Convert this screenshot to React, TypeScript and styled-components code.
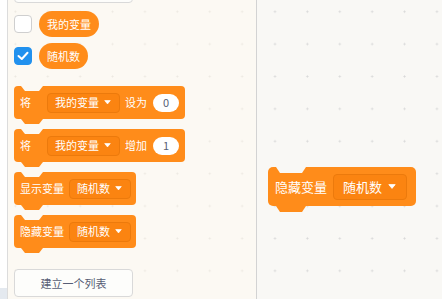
import styled, { createGlobalStyle } from 'styled-components';

const ORANGE = '#ff8c1a';
const PALETTE_BG = '#fcf9f3';
const WORKSPACE_BG = '#f9f8f5';

const GlobalStyle = createGlobalStyle`
  html, body {
    margin: 0;
    padding: 0;
    overflow: hidden;
  }
  body {
    font-family: 'Noto Sans CJK SC', 'Noto Sans', sans-serif;
  }
`;

function CheckIcon() {
  return (
    <svg width='12' height='10' viewBox='0 0 12 10'>
      <polyline points='1.5,5 4.8,8 10.5,1.8' fill='none' stroke='#fff' strokeWidth='2' strokeLinecap='round' strokeLinejoin='round' />
    </svg>
  );
}

function Caret({ lg }: { lg?: boolean }) {
  const w = lg ? 8 : 7;
  return (
    <svg width={w} height={lg ? 5 : 4.5} viewBox='0 0 8 5'>
      <path d='M0.8 0.6 H7.2 L4 4.4 Z' fill='#fff' stroke='#fff' strokeWidth='0.8' strokeLinejoin='round' />
    </svg>
  );
}

function Dropdown({ children, lg }: { children: string; lg?: boolean }) {
  return (
    <Field $lg={lg}>
      <span>{children}</span>
      <Caret lg={lg} />
    </Field>
  );
}

export default function App() {
  return (
    <>
      <GlobalStyle />
      <Editor>
        <CategoryStrip>
          <ExtensionCorner />
        </CategoryStrip>

        <Palette>
          <PaletteList>
            <PaletteButton $cut>建立一个变量</PaletteButton>

            <VarRow>
              <Checkbox />
              <Reporter>我的变量</Reporter>
            </VarRow>
            <VarRow>
              <Checkbox $checked>
                <CheckIcon />
              </Checkbox>
              <Reporter>随机数</Reporter>
            </VarRow>

            <Block $hole={PALETTE_BG} $first>
              <Label $wide>将</Label>
              <Dropdown>我的变量</Dropdown>
              <Label>设为</Label>
              <NumberPill>0</NumberPill>
            </Block>
            <Block $hole={PALETTE_BG}>
              <Label $wide>将</Label>
              <Dropdown>我的变量</Dropdown>
              <Label>增加</Label>
              <NumberPill>1</NumberPill>
            </Block>
            <Block $hole={PALETTE_BG}>
              <Label>显示变量</Label>
              <Dropdown>随机数</Dropdown>
            </Block>
            <Block $hole={PALETTE_BG}>
              <Label>隐藏变量</Label>
              <Dropdown>随机数</Dropdown>
            </Block>

            <PaletteButton>建立一个列表</PaletteButton>
          </PaletteList>
        </Palette>

        <Workspace>
          <Placed $x={11} $y={167}>
            <Block $hole={WORKSPACE_BG} $lg>
              <Label>隐藏变量</Label>
              <Dropdown lg>随机数</Dropdown>
            </Block>
          </Placed>
        </Workspace>
      </Editor>
    </>
  );
}

const Editor = styled.div`
  display: flex;
  width: 442px;
  height: 299px;
  overflow: hidden;
`;

const CategoryStrip = styled.div`
  width: 7px;
  flex-shrink: 0;
  display: flex;
  flex-direction: column;
  justify-content: flex-end;
  background: #ffffff;
  border-right: 1px solid #dcdcdc;
`;

const ExtensionCorner = styled.div`
  height: 11px;
  background: #e4e9ef;
`;

const Palette = styled.div`
  width: 248px;
  flex-shrink: 0;
  overflow: hidden;
  border-right: 1px solid #d3d3d3;
  background-color: ${PALETTE_BG};
  background-image: radial-gradient(circle, #ece8e1 0.8px, transparent 1.2px);
  background-size: 32.4px 32.4px;
  background-position: -8.8px -4.5px;
`;

const PaletteList = styled.div`
  display: flex;
  flex-direction: column;
  align-items: flex-start;
  padding-left: 6px;
  margin-top: -25px;
`;

const PaletteButton = styled.div<{ $cut?: boolean }>`
  box-sizing: border-box;
  width: 119px;
  height: 28px;
  margin: ${(p) => (p.$cut ? '0 0 8px' : '11px 0 0')};
  display: flex;
  align-items: center;
  justify-content: center;
  background: #fdfdfb;
  border: 1px solid #d9d9d9;
  border-radius: 4px;
  color: #575e75;
  font-size: 11px;
`;

const VarRow = styled.div`
  display: flex;
  align-items: center;
  gap: 7px;
  height: 26px;
  margin-bottom: 6px;
  &:nth-of-type(3) {
    margin-bottom: 17px;
  }
`;

const Checkbox = styled.div<{ $checked?: boolean }>`
  box-sizing: border-box;
  width: 18px;
  height: 18px;
  display: flex;
  align-items: center;
  justify-content: center;
  border-radius: 4px;
  background: ${(p) => (p.$checked ? '#2191ee' : '#ffffff')};
  border: 1px solid ${(p) => (p.$checked ? '#2191ee' : '#cfcfcf')};
`;

const Reporter = styled.div`
  height: 26px;
  padding: 0 8px;
  display: flex;
  align-items: center;
  border-radius: 13px;
  background: ${ORANGE};
  color: #ffffff;
  font-size: 11px;
  line-height: 1;
`;

const Block = styled.div<{ $lg?: boolean; $hole: string; $first?: boolean }>`
  position: relative;
  display: flex;
  align-items: center;
  flex-shrink: 0;
  gap: ${(p) => (p.$lg ? 6 : 5)}px;
  height: ${(p) => (p.$lg ? 39 : 33)}px;
  padding: 0 ${(p) => (p.$lg ? 9 : 5)}px 0 ${(p) => (p.$lg ? 7 : 6)}px;
  margin-bottom: ${(p) => (p.$lg ? 0 : 10)}px;
  background: ${ORANGE};
  border-radius: ${(p) => (p.$lg ? 5 : 4)}px;
  color: #ffffff;
  font-size: ${(p) => (p.$lg ? 13 : 11)}px;
  line-height: 1;

  &::before,
  &::after {
    content: '';
    position: absolute;
    left: ${(p) => (p.$lg ? 8 : 7)}px;
    width: ${(p) => (p.$lg ? 30 : 22)}px;
    height: ${(p) => (p.$lg ? 6 : 5)}px;
    clip-path: polygon(0 0, 100% 0, calc(100% - 4px) 100%, 4px 100%);
  }
  &::before {
    top: 0;
    background: ${(p) => p.$hole};
  }
  &::after {
    top: 100%;
    background: ${ORANGE};
  }
`;

const Label = styled.span<{ $wide?: boolean }>`
  white-space: nowrap;
  margin-right: ${(p) => (p.$wide ? 11 : 0)}px;
`;

const Field = styled.div<{ $lg?: boolean }>`
  box-sizing: border-box;
  display: flex;
  align-items: center;
  gap: ${(p) => (p.$lg ? 6 : 5)}px;
  height: ${(p) => (p.$lg ? 26 : 20)}px;
  padding: 0 ${(p) => (p.$lg ? 10 : 8)}px 0 ${(p) => (p.$lg ? 9 : 7)}px;
  background: #fb8411;
  border: 1px solid #ec7a0c;
  border-radius: 4px;
  white-space: nowrap;
`;

const NumberPill = styled.div`
  width: 26px;
  height: 18px;
  margin: 0 1px;
  display: flex;
  align-items: center;
  justify-content: center;
  border-radius: 9px;
  background: #ffffff;
  color: #575e75;
  font-size: 11px;
`;

const Workspace = styled.div`
  position: relative;
  flex: 1;
  background-color: ${WORKSPACE_BG};
  background-image: radial-gradient(circle, #d8d8d8 0.8px, transparent 1.3px);
  background-size: 32.4px 32.4px;
  background-position: 1.8px -4.5px;
`;

const Placed = styled.div<{ $x: number; $y: number }>`
  position: absolute;
  left: ${(p) => p.$x}px;
  top: ${(p) => p.$y}px;
`;
